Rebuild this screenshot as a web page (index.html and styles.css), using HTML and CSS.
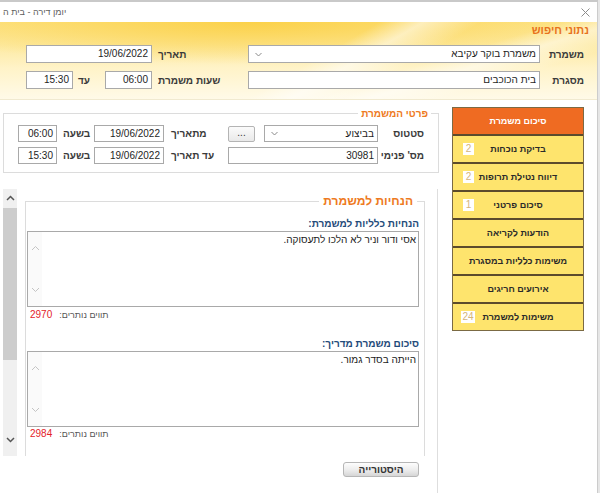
FILE: index.html
```html
<!DOCTYPE html>
<html lang="he">
<head>
<meta charset="utf-8">
<title>יומן דירה</title>
<link rel="stylesheet" href="styles.css">
</head>
<body>
<div class="window">
  <header class="titlebar">
    <span class="title">יומן דירה - בית ה</span>
    <svg class="close" width="9" height="9" viewBox="0 0 9 9"><path d="M0.5 0.5L8.5 8.5M8.5 0.5L0.5 8.5" stroke="#8c8c8c" stroke-width="1" fill="none"/></svg>
  </header>

  <section class="search" dir="rtl">
    <div class="search-head">נתוני חיפוש</div>
    <div class="srow">
      <span class="slbl">משמרת</span>
      <div class="field select s-wide"><span>משמרת בוקר עקיבא</span><svg class="chev" width="7" height="5" viewBox="0 0 7 5"><path d="M0.5 1L3.5 4L6.5 1" stroke="#8a8a8a" fill="none"/></svg></div>
      <span class="slbl2">תאריך</span>
      <div class="field s-date">19/06/2022</div>
    </div>
    <div class="srow srow2">
      <span class="slbl">מסגרת</span>
      <div class="field s-wide">בית הכוכבים</div>
      <span class="slbl2">שעות משמרת</span>
      <div class="field s-time">06:00</div>
      <span class="slbl3">עד</span>
      <div class="field s-time">15:30</div>
    </div>
  </section>

  <div class="main" dir="rtl">
    <nav class="side">
      <div class="nav-item active">סיכום משמרת</div>
      <div class="nav-item"><span class="badge">2</span>בדיקת נוכחות</div>
      <div class="nav-item"><span class="badge">2</span>דיווח נטילת תרופות</div>
      <div class="nav-item"><span class="badge">1</span>סיכום פרטני</div>
      <div class="nav-item">הודעות לקריאה</div>
      <div class="nav-item">משימות כלליות במסגרת</div>
      <div class="nav-item">אירועים חריגים</div>
      <div class="nav-item"><span class="badge badge-wide">24</span>משימות למשמרת</div>
    </nav>

    <div class="content">
      <fieldset class="details">
        <legend>פרטי המשמרת</legend>
        <div class="drow">
          <span class="dl1">סטטוס</span>
          <div class="field select d-status"><span>בביצוע</span><svg class="chev" width="7" height="5" viewBox="0 0 7 5"><path d="M0.5 1L3.5 4L6.5 1" stroke="#8a8a8a" fill="none"/></svg></div>
          <div class="btn-dots">...</div>
          <span class="dl2">מתאריך</span>
          <div class="field d-date">19/06/2022</div>
          <span class="dl3">בשעה</span>
          <div class="field d-time">06:00</div>
        </div>
        <div class="drow drow2">
          <span class="dl1">מס' פנימי</span>
          <div class="field d-num">30981</div>
          <span class="dl2">עד תאריך</span>
          <div class="field d-date">19/06/2022</div>
          <span class="dl3">בשעה</span>
          <div class="field d-time">15:30</div>
        </div>
      </fieldset>

      <div class="panel">
        <div class="scroller">
          <div class="scroll-body">
            <fieldset class="notes">
              <legend>הנחיות למשמרת</legend>
              <div class="note-head">הנחיות כלליות למשמרת:</div>
              <div class="ta">
                <div class="ta-text">אסי ודור וניר לא הלכו לתעסוקה.</div>
                <div class="ta-bar">
                  <svg width="9" height="6" viewBox="0 0 9 6"><path d="M1 5L4.5 1.5L8 5" stroke="#c4c4c4" fill="none"/></svg>
                  <svg width="9" height="6" viewBox="0 0 9 6"><path d="M1 1L4.5 4.5L8 1" stroke="#c4c4c4" fill="none"/></svg>
                </div>
              </div>
              <div class="counter"><span class="c-lbl">תווים נותרים:</span><span class="c-num">2970</span></div>

              <div class="note-head note-head2">סיכום משמרת מדריך:</div>
              <div class="ta">
                <div class="ta-text">הייתה בסדר גמור.</div>
                <div class="ta-bar">
                  <svg width="9" height="6" viewBox="0 0 9 6"><path d="M1 5L4.5 1.5L8 5" stroke="#c4c4c4" fill="none"/></svg>
                  <svg width="9" height="6" viewBox="0 0 9 6"><path d="M1 1L4.5 4.5L8 1" stroke="#c4c4c4" fill="none"/></svg>
                </div>
              </div>
              <div class="counter counter2"><span class="c-lbl">תווים נותרים:</span><span class="c-num">2984</span></div>
            </fieldset>
          </div>
          <div class="vscroll">
            <div class="vs-btn"><svg width="9" height="6" viewBox="0 0 9 6"><path d="M1 5L4.5 1.5L8 5" stroke="#555" stroke-width="1.5" fill="none"/></svg></div>
            <div class="vs-thumb"></div>
            <div class="vs-fill"></div>
            <div class="vs-btn"><svg width="9" height="6" viewBox="0 0 9 6"><path d="M1 1L4.5 4.5L8 1" stroke="#555" stroke-width="1.5" fill="none"/></svg></div>
          </div>
        </div>
        <div class="footer">
          <button class="btn-hist" type="button">היסטורייה</button>
        </div>
      </div>
    </div>
  </div>
</div>
</body>
</html>
```

FILE: styles.css
```css
html, body {
  margin: 0;
  padding: 0;
}
body {
  width: 600px;
  height: 493px;
  overflow: hidden;
  background: #e6e6e6;
  font-family: "Liberation Sans", Arial, sans-serif;
  font-size: 10px;
  color: #222;
}
.window {
  width: 598px;
  height: 493px;
  box-sizing: border-box;
  background: #fff;
  border-top: 2px solid #c9c9c9;
  border-right: 1px solid #cccccc;
  display: flex;
  flex-direction: column;
  overflow: hidden;
}

/* title bar */
.titlebar {
  direction: ltr;
  height: 20px;
  flex: none;
  display: flex;
  align-items: center;
  justify-content: space-between;
  padding: 0 7px 0 3px;
}
.title {
  font-size: 9px;
  color: #5e5e5e;
}
.close {
  display: block;
}

/* search panel */
.search {
  height: 78px;
  flex: none;
  box-sizing: border-box;
  padding: 1px 8px 0 0;
  background:
    linear-gradient(150deg, rgba(255,255,255,0) 52%, rgba(255,255,255,0.55) 58%, rgba(255,255,255,0) 66%),
    linear-gradient(163deg, rgba(255,255,255,0) 66%, rgba(255,255,255,0.5) 73%, rgba(255,255,255,0) 82%),
    radial-gradient(ellipse 60% 55% at 42% 0%, rgba(251,206,62,0.85) 0%, rgba(252,214,90,0) 100%),
    linear-gradient(180deg, #fde48a 0%, #fdeaa2 30%, #fff3c8 60%, #fffae8 100%);
  border-bottom: 1px solid #f1ead0;
}
.search-head {
  font-size: 11px;
  font-weight: bold;
  color: #e8721c;
  line-height: 14px;
}
.srow {
  display: flex;
  align-items: center;
  height: 18px;
  padding-right: 5px;
  margin-top: 8px;
}
.srow2 {
  margin-top: 8px;
}
.slbl {
  width: 44px;
  flex: none;
  box-sizing: border-box;
  font-weight: bold;
  color: #3a3a3a;
}
.slbl2 {
  width: 96px;
  flex: none;
  box-sizing: border-box;
  text-align: left;
  padding-left: 6px;
  font-weight: bold;
  color: #3a3a3a;
}
.slbl3 {
  width: 32px;
  flex: none;
  box-sizing: border-box;
  text-align: left;
  padding-left: 5px;
  font-weight: bold;
  color: #3a3a3a;
}

/* generic input look */
.field {
  box-sizing: border-box;
  flex: none;
  height: 18px;
  border: 1px solid #a9a9a9;
  background: #fff;
  padding: 0 3px;
  line-height: 16px;
  white-space: nowrap;
  overflow: hidden;
  color: #1e1e1e;
}
.select {
  display: flex;
  align-items: center;
  justify-content: space-between;
}
.chev {
  display: block;
  flex: none;
  margin-left: 3px;
}
.s-wide { width: 292px; }
.s-date { width: 126px; }
.s-time { width: 47px; }

/* main area */
.main {
  flex: 1;
  min-height: 0;
  display: flex;
  align-items: flex-start;
  padding-top: 7px;
}
.side {
  width: 132px;
  flex: none;
  margin-right: 13px;
  box-sizing: border-box;
  border: 1px solid #7b6a44;
}
.nav-item {
  position: relative;
  height: 26px;
  line-height: 26px;
  text-align: center;
  font-weight: bold;
  font-size: 9px;
  color: #2a2a2a;
  background: #fee46d;
  border-bottom: 2px solid #5c4b2c;
}
.nav-item:last-child {
  border-bottom: none;
}
.nav-item.active {
  background: #ef6b22;
  color: #fff;
}
.badge {
  position: absolute;
  left: 10px;
  top: 7px;
  width: 11px;
  height: 12px;
  line-height: 12px;
  background: #fff;
  color: #d5b57a;
  font-size: 10px;
  font-weight: normal;
  text-align: center;
}
.badge-wide {
  left: 8px;
  width: 14px;
}

.content {
  width: 436px;
  flex: none;
  margin-right: 13px;
  display: flex;
  flex-direction: column;
  height: 386px;
}

/* details group */
.details {
  margin: 0;
  min-width: 0;
  box-sizing: border-box;
  padding: 0 14px 8px 14px;
  border: 1px solid #dcdcdc;
}
.details legend {
  padding: 0 3px;
  margin-right: -7px;
  font-size: 10px;
  font-weight: bold;
  line-height: 13px;
  color: #ee7a22;
}
.drow {
  display: flex;
  align-items: center;
  height: 17px;
  margin-top: 5px;
}
.drow .field {
  height: 17px;
  line-height: 15px;
}
.dl1 {
  width: 46px;
  flex: none;
  font-weight: bold;
  color: #3a3a3a;
}
.dl2 {
  width: 64px;
  flex: none;
  box-sizing: border-box;
  text-align: left;
  padding-left: 7px;
  font-weight: bold;
  color: #3a3a3a;
}
.dl3 {
  width: 37px;
  flex: none;
  box-sizing: border-box;
  text-align: left;
  padding-left: 6px;
  font-weight: bold;
  color: #3a3a3a;
}
.d-status { width: 114px; }
.d-num { width: 150px; }
.d-date { width: 70px; }
.d-time { width: 39px; }
.btn-dots {
  width: 27px;
  height: 16px;
  flex: none;
  box-sizing: border-box;
  margin-right: 9px;
  border: 1px solid #b4b4b4;
  border-radius: 2px;
  background: linear-gradient(#fbfbfb, #e9e9e9);
  text-align: center;
  line-height: 12px;
  font-size: 10px;
  color: #333;
}

/* scroll panel */
.panel {
  flex: 1;
  margin-top: 16px;
  margin-right: 1px;
  border-right: 1px solid #dedede;
  display: flex;
  flex-direction: column;
}
.scroller {
  height: 267px;
  flex: none;
  display: flex;
}
.scroll-body {
  flex: 1;
  min-width: 0;
  overflow: hidden;
  padding: 4px 12px 0 8px;
}
.notes {
  margin: 0;
  min-width: 0;
  box-sizing: border-box;
  padding: 0 5px 30px 1px;
  border: 1px solid #dcdcdc;
}
.notes legend {
  padding: 0 4px;
  margin-right: 2px;
  font-size: 12px;
  font-weight: bold;
  line-height: 16px;
  color: #ee7a22;
}
.note-head {
  margin-top: 8px;
  line-height: 14px;
  font-size: 10px;
  font-weight: bold;
  color: #1f4b7a;
}
.note-head2 {
  margin-top: 16px;
}
.ta {
  height: 76px;
  box-sizing: border-box;
  border: 1px solid #a9a9a9;
  background: #fff;
  display: flex;
}
.ta-text {
  flex: 1;
  padding: 1px 2px 0 0;
  line-height: 13px;
  color: #222;
}
.ta-bar {
  width: 14px;
  flex: none;
  background: #fafafa;
  display: flex;
  flex-direction: column;
  justify-content: space-between;
  align-items: center;
  padding: 13px 0 13px;
  box-sizing: border-box;
}
.ta-bar svg {
  display: block;
}
.counter {
  display: flex;
  justify-content: flex-end;
  align-items: baseline;
  gap: 7px;
  margin-top: 2px;
  line-height: 12px;
  padding-left: 3px;
}
.counter2 {
  margin-top: 1px;
}
.c-lbl {
  color: #555;
  font-size: 9px;
}
.c-num {
  color: #e3232a;
  font-size: 10px;
}

.vscroll {
  width: 14px;
  flex: none;
  background: #f0f0f0;
  display: flex;
  flex-direction: column;
  padding-bottom: 8px;
  box-sizing: border-box;
}
.vs-btn {
  height: 17px;
  flex: none;
  display: flex;
  align-items: center;
  justify-content: center;
}
.vs-btn svg {
  display: block;
}
.vs-thumb {
  height: 152px;
  flex: none;
  margin-top: 2px;
  background: #cdcdcd;
}
.vs-fill {
  flex: 1;
}

.footer {
  flex: 1;
  display: flex;
  align-items: flex-start;
  padding-top: 6px;
  padding-right: 18px;
}
.btn-hist {
  width: 76px;
  height: 15px;
  padding: 0;
  margin: 0;
  box-sizing: border-box;
  border: 1px solid #b6b6b6;
  border-radius: 3px;
  background: linear-gradient(#fdfdfd 0%, #ececec 55%, #d6d6d6 100%);
  font-family: "Liberation Sans", Arial, sans-serif;
  font-size: 10px;
  font-weight: bold;
  color: #333;
  line-height: 13px;
}
```
